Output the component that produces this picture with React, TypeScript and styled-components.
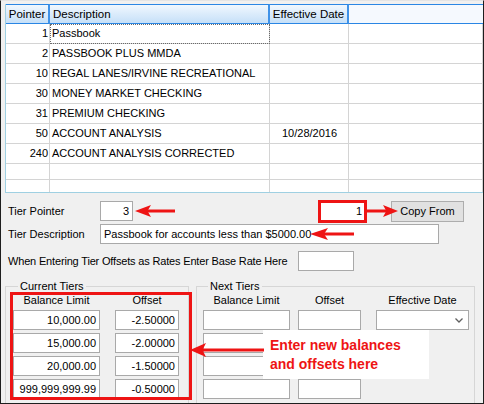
import React from "react";
import styled, { createGlobalStyle } from "styled-components";

const GlobalStyle = createGlobalStyle`
  html, body { margin: 0; padding: 0; background: #ffffff; }
  * { box-sizing: border-box; }
`;

const RED = "#ee1414";

const rows = [
  { ptr: "1", desc: "Passbook", date: "", focus: true },
  { ptr: "2", desc: "PASSBOOK PLUS MMDA", date: "" },
  { ptr: "10", desc: "REGAL LANES/IRVINE RECREATIONAL", date: "" },
  { ptr: "30", desc: "MONEY MARKET CHECKING", date: "" },
  { ptr: "31", desc: "PREMIUM CHECKING", date: "" },
  { ptr: "50", desc: "ACCOUNT ANALYSIS", date: "10/28/2016" },
  { ptr: "240", desc: "ACCOUNT ANALYSIS CORRECTED", date: "" },
  { ptr: "", desc: "", date: "" },
  { ptr: "", desc: "", date: "" },
];

const currentTiers = [
  ["10,000.00", "-2.50000"],
  ["15,000.00", "-2.00000"],
  ["20,000.00", "-1.50000"],
  ["999,999,999.99", "-0.50000"],
];

const Frame = styled.div`
  position: relative;
  width: 484px;
  height: 404px;
  background: #f0f0f0;
  border: 1px solid #1e1e1e;
  border-top-color: #e4e4e4;
  overflow: hidden;
  font-family: "Liberation Sans", Arial, sans-serif;
  font-size: 11px;
  color: #000;
`;

const Grid = styled.div`
  margin: 3px 0 0 4px;
  height: 189px;
  border-left: 1px solid #9fd0e2;
  border-bottom: 1px solid #9fd0e2;
  background: #fff;
  display: grid;
  grid-template-columns: 44px 220px 79px 1fr;
  grid-template-rows: 20px repeat(7, 20px) 16px 20px;
  overflow: hidden;
`;

const HeadCell = styled.div<{ $align: string; $plain?: boolean }>`
  display: flex;
  align-items: center;
  justify-content: ${(p) => p.$align};
  padding: 0 3px;
  border-top: 1px solid #2a86e4;
  border-bottom: 1px solid #2a86e4;
  border-right: ${(p) => (p.$plain ? "none" : "2px solid #3f92e8")};
  background: ${(p) =>
    p.$plain ? "#f5f9fe" : "linear-gradient(#f0f7fe, #c6e0f8)"};
  font-size: 11.5px;
  white-space: nowrap;
`;

const Cell = styled.div<{ $align: string; $focus?: boolean }>`
  border-right: 1px solid #d4d4d4;
  border-bottom: 1px solid #d4d4d4;
  line-height: 19px;
  padding: 0 1px 0 2px;
  text-align: ${(p) => p.$align};
  white-space: nowrap;
  overflow: hidden;
  ${(p) => (p.$focus ? "outline: 1px dotted #6a6a6a; outline-offset: -1px;" : "")}
`;

const Form = styled.div`
  display: flex;
  flex-direction: column;
  padding-left: 4px;
`;

const FieldRow = styled.div<{ $top: number }>`
  display: flex;
  align-items: center;
  height: 22px;
  margin-top: ${(p) => p.$top}px;
  padding-left: 3px;
`;

const Label = styled.span<{ $w: number; $tight?: boolean }>`
  flex: none;
  width: ${(p) => p.$w}px;
  white-space: nowrap;
  letter-spacing: ${(p) => (p.$tight ? "-0.17px" : "normal")};
`;

const TextBox = styled.div<{ $w: number; $left?: boolean; $col?: number }>`
  flex: none;
  width: ${(p) => p.$w}px;
  height: 20px;
  border: 1px solid #a9a9a9;
  background: #fff;
  display: flex;
  align-items: center;
  justify-content: ${(p) => (p.$left ? "flex-start" : "flex-end")};
  padding: 0 3px;
  white-space: nowrap;
  overflow: hidden;
  ${(p) => (p.$col ? `grid-column: ${p.$col};` : "")}
`;

const MarkedBox = styled(TextBox)`
  height: 23px;
  border: 3px solid ${RED};
  margin-left: 185px;
  padding: 0 2px;
`;

const Button = styled.button`
  flex: none;
  width: 73px;
  height: 21px;
  margin-left: 24px;
  padding: 0;
  background: #e1e1e1;
  border: 1px solid #adadad;
  font-family: inherit;
  font-size: 11px;
  color: #000;
`;

const Groups = styled.div`
  display: flex;
  gap: 7px;
  margin-top: 8px;
`;

const Group = styled.fieldset<{ $w: number; $pad: number }>`
  flex: none;
  margin: 0;
  min-width: 0;
  width: ${(p) => p.$w}px;
  height: 150px;
  border: 1px solid #d6d6d6;
  padding: 2px 0 0 ${(p) => p.$pad}px;
`;

const Legend = styled.legend`
  padding: 0 2px;
  margin-left: 5px;
  font-size: 11px;
  line-height: 13px;
`;

const TierGrid = styled.div<{ $cols: string; $gap: number }>`
  position: relative;
  display: grid;
  grid-template-columns: ${(p) => p.$cols};
  grid-template-rows: 11px;
  grid-auto-rows: 19px;
  column-gap: ${(p) => p.$gap}px;
  row-gap: 4px;
`;

const ColHead = styled.div<{ $shift?: number }>`
  line-height: 11px;
  text-align: center;
  white-space: nowrap;
  padding-left: ${(p) => p.$shift ?? 0}px;
`;

const Combo = styled(TextBox)`
  justify-self: end;
  padding-right: 5px;
`;

const RedFrame = styled.div`
  position: absolute;
  inset: -3px -4px -2px -3px;
  border: 3px solid ${RED};
  pointer-events: none;
`;

const Callout = styled.div`
  position: absolute;
  left: 262px;
  top: 329px;
  width: 166px;
  height: 49px;
  background: #fff;
  padding: 6px 7px;
  color: ${RED};
  font-weight: bold;
  font-size: 14px;
  line-height: 19px;
  white-space: nowrap;
`;

const ArrowSvg = styled.svg<{ $x: number; $y: number }>`
  position: absolute;
  left: ${(p) => p.$x}px;
  top: ${(p) => p.$y}px;
  overflow: visible;
`;

type ArrowProps = {
  x: number;
  y: number;
  len: number;
  head: number;
  h: number;
  thick: number;
  right?: boolean;
};

function Arrow({ x, y, len, head, h, thick, right }: ArrowProps) {
  const c = h / 2;
  const notch = head * 0.78;
  return (
    <ArrowSvg $x={x - 1} $y={y - 1} width={len} height={h}>
      <g transform={right ? `translate(${len} 0) scale(-1 1)` : undefined}>
        <path
          d={`M0 ${c} L${head} 0 L${notch} ${c} L${head} ${h} Z`}
          fill={RED}
        />
        <rect x={notch - 1} y={c - thick / 2} width={len - notch + 1} height={thick} fill={RED} />
      </g>
    </ArrowSvg>
  );
}

function Chevron() {
  return (
    <svg width="8" height="5" viewBox="0 0 8 5">
      <path d="M0.5 0.5 L4 4 L7.5 0.5" fill="none" stroke="#606060" strokeWidth="1.3" />
    </svg>
  );
}

export default function App() {
  return (
    <>
      <GlobalStyle />
      <Frame>
        <Grid>
          <HeadCell $align="center">Pointer</HeadCell>
          <HeadCell $align="flex-start">Description</HeadCell>
          <HeadCell $align="center">Effective Date</HeadCell>
          <HeadCell $align="flex-start" $plain />
          {rows.map((r, i) => (
            <React.Fragment key={i}>
              <Cell $align="right">{r.ptr}</Cell>
              <Cell $align="left" $focus={r.focus}>
                {r.desc}
              </Cell>
              <Cell $align="center">{r.date}</Cell>
              <Cell $align="left" />
            </React.Fragment>
          ))}
        </Grid>

        <Form>
          <FieldRow $top={7}>
            <Label $w={92}>Tier Pointer</Label>
            <TextBox $w={33}>3</TextBox>
            <MarkedBox $w={49}>1</MarkedBox>
            <Button>Copy From</Button>
          </FieldRow>
          <FieldRow $top={1}>
            <Label $w={92}>Tier Description</Label>
            <TextBox $w={339} $left>
              Passbook for accounts less than $5000.00
            </TextBox>
          </FieldRow>
          <FieldRow $top={5}>
            <Label $w={290} $tight>
              When Entering Tier Offsets as Rates Enter Base Rate Here
            </Label>
            <TextBox $w={56} />
          </FieldRow>

          <Groups>
            <Group $w={184} $pad={7}>
              <Legend>Current Tiers</Legend>
              <TierGrid $cols="87px 64px" $gap={15}>
                <ColHead>Balance Limit</ColHead>
                <ColHead>Offset</ColHead>
                {currentTiers.map(([bal, off]) => (
                  <React.Fragment key={bal}>
                    <TextBox $w={87}>{bal}</TextBox>
                    <TextBox $w={64}>{off}</TextBox>
                  </React.Fragment>
                ))}
                <RedFrame />
              </TierGrid>
            </Group>
            <Group $w={279} $pad={6}>
              <Legend>Next Tiers</Legend>
              <TierGrid $cols="87px 63px 100px" $gap={8}>
                <ColHead>Balance Limit</ColHead>
                <ColHead>Offset</ColHead>
                <ColHead $shift={7}>Effective Date</ColHead>
                <TextBox $w={87} />
                <TextBox $w={63} />
                <Combo $w={93}>
                  <Chevron />
                </Combo>
                {[0, 1, 2].map((i) => (
                  <React.Fragment key={i}>
                    <TextBox $w={87} $col={1} />
                    <TextBox $w={63} />
                  </React.Fragment>
                ))}
              </TierGrid>
            </Group>
          </Groups>
        </Form>

        <Arrow x={135} y={205} len={40} head={16} h={12} thick={3} />
        <Arrow x={367} y={205} len={31} head={15} h={12} thick={3} right />
        <Arrow x={310} y={228} len={44} head={18} h={12} thick={3} />
        <Callout>
          Enter new balances
          <br />
          and offsets here
        </Callout>
        <Arrow x={190} y={343} len={74} head={16} h={14} thick={3} />
      </Frame>
    </>
  );
}
